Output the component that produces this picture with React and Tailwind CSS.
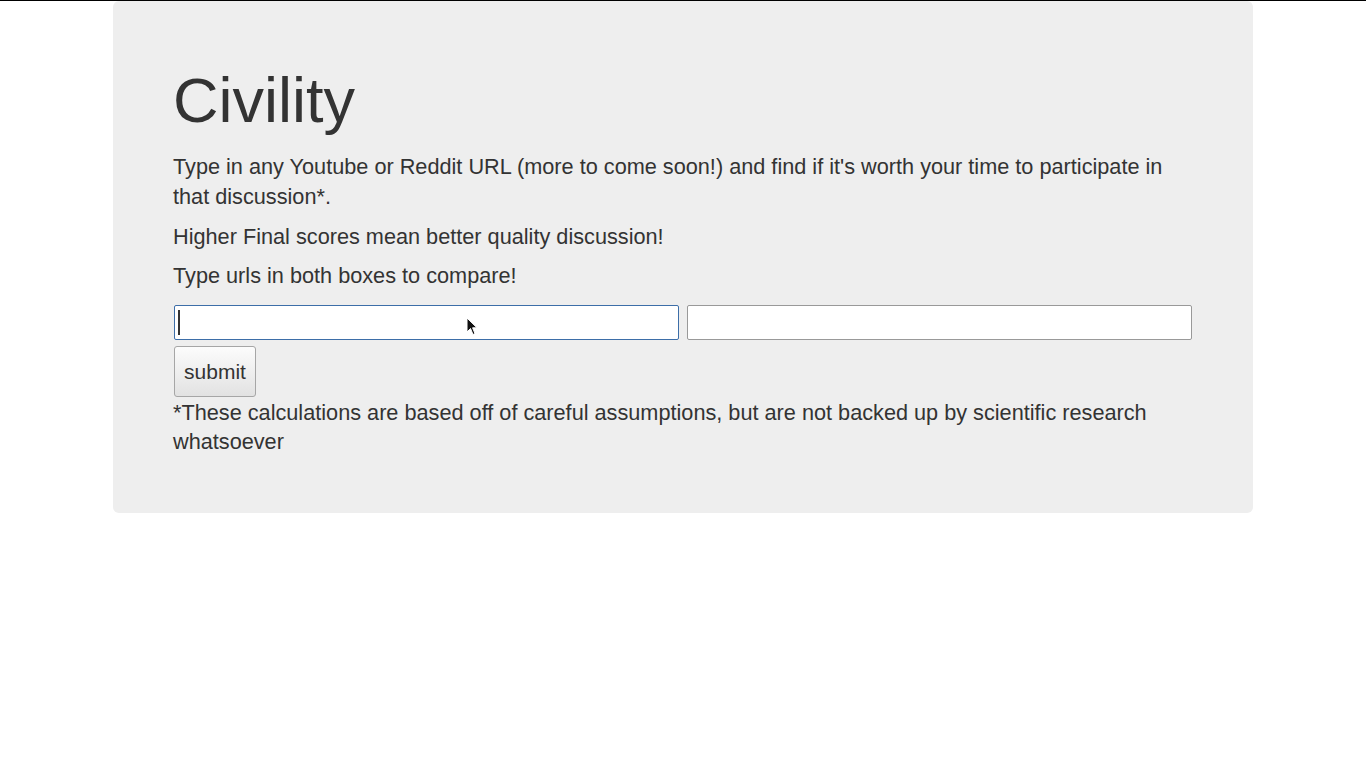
import React from "react";

export default function App() {
  return (
    <div
      className="min-h-[768px] bg-white border-t border-black text-[#333]"
      style={{ fontFamily: '"Liberation Sans", Arial, Helvetica, sans-serif' }}
    >
      <div className="mx-auto w-[1140px]">
        <div className="bg-[#eeeeee] rounded-md pt-12 pb-[47px] px-[60px]">
          <h1 className="mt-[17px] mb-[17px] text-[63px] leading-[1.1] font-normal">Civility</h1>
          <p className="text-[21.7px] leading-[30px] mb-2.5">
            Type in any Youtube or Reddit URL (more to come soon!) and find if it's worth your time to participate in that discussion*.
          </p>
          <p className="text-[21.7px] leading-[30px] mb-[9px]">Higher Final scores mean better quality discussion!</p>
          <p className="text-[21.7px] leading-[30px] mb-2.5">Type urls in both boxes to compare!</p>
          <div className="flex gap-2 mt-[14px] pl-px">
            <div className="relative w-[505px] h-[35px] bg-white border border-[#3d6ea8] rounded-[2px]">
              <span className="absolute left-[3px] top-[4px] w-[2px] h-[25px] bg-[#333]" />
              <svg
                className="absolute left-[291px] top-[11px]"
                width="12"
                height="19"
                viewBox="0 0 12 19"
              >
                <path
                  d="M1 1 L1 15 L4.5 11.5 L7 17.5 L9 16.6 L6.6 10.8 L11 10.8 Z"
                  fill="#111"
                  stroke="#fff"
                  strokeWidth="1"
                  strokeLinejoin="round"
                />
              </svg>
            </div>
            <div className="w-[505px] h-[35px] bg-white border border-[#999] rounded-[2px]" />
          </div>
          <div className="mt-[6px] pl-px">
            <button className="h-[51px] w-[82px] rounded-[3px] border border-[#a6a6a6] bg-gradient-to-b from-[#fcfcfc] to-[#e2e2e2] text-[21px] text-[#333]">
              submit
            </button>
          </div>
          <p className="text-[21.7px] leading-[29px] mb-2.5 mt-px">
            *These calculations are based off of careful assumptions, but are not backed up by scientific research whatsoever
          </p>
        </div>
      </div>
    </div>
  );
}
